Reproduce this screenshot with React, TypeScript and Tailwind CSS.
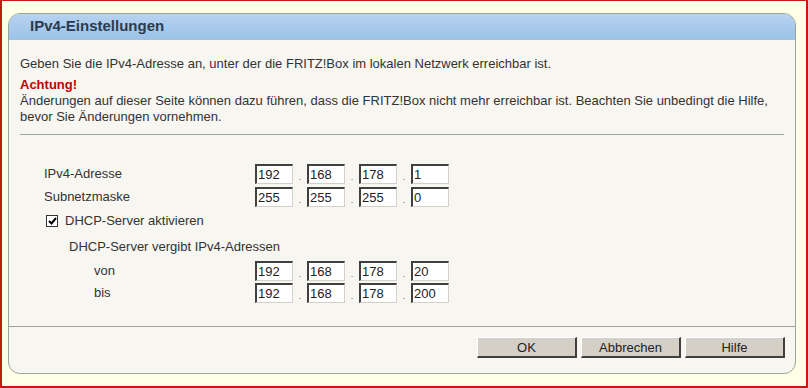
import React from "react";

const Field = ({ v }: { v: string }) => (
  <div className="w-[38px] h-[20px] bg-white border border-t-[#404040] border-l-[#404040] border-r-[#d4d0c8] border-b-[#d4d0c8] border-t-2 border-l-2 pl-[1px] text-[13px] leading-[17px] text-[#222]">
    {v}
  </div>
);

const Ip = ({ vals }: { vals: string[] }) => (
  <div className="flex items-center">
    {vals.map((v, i) => (
      <div key={i} className="flex items-center">
        {i > 0 && <span className="w-[14px] text-center text-[9px] text-[#666] leading-none pt-[6px]">.</span>}
        <Field v={v} />
      </div>
    ))}
  </div>
);

const Btn = ({ label }: { label: string }) => (
  <button className="w-[100px] h-[21px] bg-[#d4d0c8] border border-t-[#ffffff] border-l-[#ffffff] border-r-[#404040] border-b-[#404040] border-r-2 border-b-2 text-[13px] text-[#222] leading-none">
    {label}
  </button>
);

export default function App() {
  return (
    <div
      className="w-[808px] h-[388px] bg-[#fffee6] border-2 border-t-[1px] border-[#c41a12] pl-[6px] pr-[10px] pt-[12px] pb-[12px] text-[#333]"
      style={{ fontFamily: '"Liberation Sans", Arial, sans-serif' }}
    >
      <div className="h-full flex flex-col border border-[#9aa59a] rounded-[12px] bg-[#f7f6f1] overflow-hidden">
        <div className="h-[26px] bg-gradient-to-b from-[#b6d3f0] to-[#9cc2e8] border-b border-[#a9c2d9] flex items-center pl-[21px]">
          <span className="text-[15px] font-bold text-[#2b3b4d]">IPv4-Einstellungen</span>
        </div>
        <div className="flex-1 px-[11px] pt-[16px] text-[13px] leading-[16px]">
          <div>Geben Sie die IPv4-Adresse an, unter der die FRITZ!Box im lokalen Netzwerk erreichbar ist.</div>
          <div className="mt-[5px] font-bold text-[#c00000] text-[13px]">Achtung!</div>
          <div>
            Änderungen auf dieser Seite können dazu führen, dass die FRITZ!Box nicht mehr erreichbar ist. Beachten Sie unbedingt die Hilfe,
            <br />
            bevor Sie Änderungen vornehmen.
          </div>
          <div className="mt-[9px] border-t border-[#9aaa9a]" />
          <div className="mt-[29px] flex flex-col gap-[3px]">
            <div className="flex items-center">
              <span className="pl-[24px] w-[235px] text-[13px]">IPv4-Adresse</span>
              <Ip vals={["192", "168", "178", "1"]} />
            </div>
            <div className="flex items-center">
              <span className="pl-[24px] w-[235px] text-[13px]">Subnetzmaske</span>
              <Ip vals={["255", "255", "255", "0"]} />
            </div>
          </div>
          <div className="flex items-center mt-[6px] pl-[26px]">
            <span className="w-[12px] h-[12px] bg-white border border-[#333] flex items-center justify-center">
              <svg width="9" height="8" viewBox="0 0 9 8">
                <path d="M1 4 L3.5 6.5 L8 1" stroke="#000" strokeWidth="2" fill="none" />
              </svg>
            </span>
            <span className="ml-[7px] text-[13px]">DHCP-Server aktivieren</span>
          </div>
          <div className="mt-[10px] pl-[49px] text-[13px]">DHCP-Server vergibt IPv4-Adressen</div>
          <div className="mt-[6px] flex flex-col gap-[2px]">
            <div className="flex items-center">
              <span className="pl-[74px] w-[235px] text-[13px]">von</span>
              <Ip vals={["192", "168", "178", "20"]} />
            </div>
            <div className="flex items-center">
              <span className="pl-[74px] w-[235px] text-[13px]">bis</span>
              <Ip vals={["192", "168", "178", "200"]} />
            </div>
          </div>
        </div>
        <div className="h-[47px] border-t border-[#a0a0a0] flex justify-end items-start pt-[10px] pr-[10px] gap-[4px]">
          <Btn label="OK" />
          <Btn label="Abbrechen" />
          <Btn label="Hilfe" />
        </div>
      </div>
    </div>
  );
}
